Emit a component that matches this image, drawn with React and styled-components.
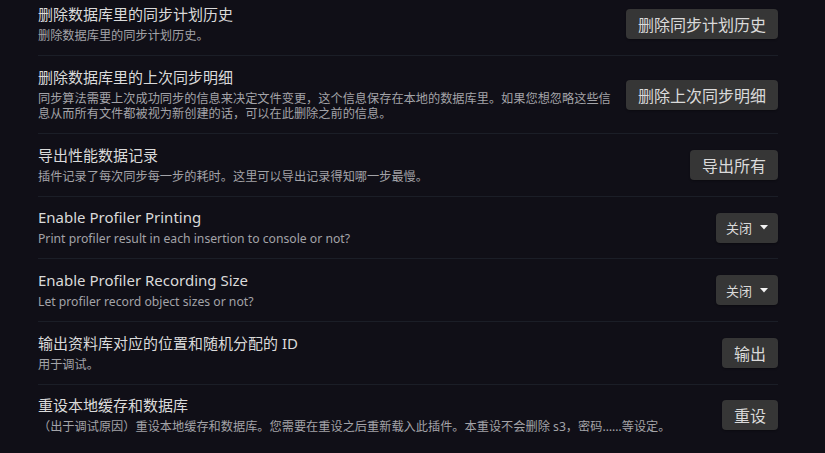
import React from 'react';
import styled, { createGlobalStyle } from 'styled-components';

const Global = createGlobalStyle`
  html, body {
    margin: 0;
    padding: 0;
    background: #100f17;
  }
  body {
    font-family: "Noto Sans", "Noto Sans CJK SC", sans-serif;
  }
`

const Page = styled.div`
  width: 825px;
  height: 453px;
  overflow: hidden;
  box-sizing: border-box;
  padding: 0 47px 0 38px;
  background: #100f17;
`

const Item = styled.div`
  display: flex;
  align-items: center;
  padding: 11.5px 0;
  border-top: 1px solid #1b1e27;

  &:first-child {
    padding-top: 5px;
    border-top: none;
  }
`

const Info = styled.div`
  flex: 1;
  margin-right: 8px;
  min-width: 0;
`

const Title = styled.div`
  font-size: 15px;
  line-height: 19px;
  color: #dadada;
`

const Desc = styled.div`
  padding-top: 4px;
  font-size: 12.2px;
  line-height: 15.6px;
  color: #a3a3a8;
`

const Button = styled.button`
  flex: none;
  height: 30px;
  padding: 0 12px;
  border: none;
  border-radius: 4px;
  background: #363636;
  color: #dadada;
  font-family: inherit;
  font-size: 16px;
  cursor: pointer;
  box-shadow: 0 1px 2px rgba(0, 0, 0, 0.3);
`

const Select = styled.div`
  flex: none;
  display: flex;
  align-items: center;
  gap: 8px;
  height: 30px;
  padding: 0 10px;
  border-radius: 4px;
  background: #363636;
  color: #dadada;
  font-size: 13px;
  box-shadow: 0 1px 2px rgba(0, 0, 0, 0.3);
`

const Caret = () => (
  <svg width="8" height="5" viewBox="0 0 8 5">
    <path d="M0 0 L8 0 L4 4.5 Z" fill="#f2f2f2" />
  </svg>
)

const items = [
  {
    title: '删除数据库里的同步计划历史',
    desc: '删除数据库里的同步计划历史。',
    button: '删除同步计划历史',
  },
  {
    title: '删除数据库里的上次同步明细',
    desc: '同步算法需要上次成功同步的信息来决定文件变更，这个信息保存在本地的数据库里。如果您想忽略这些信息从而所有文件都被视为新创建的话，可以在此删除之前的信息。',
    button: '删除上次同步明细',
  },
  {
    title: '导出性能数据记录',
    desc: '插件记录了每次同步每一步的耗时。这里可以导出记录得知哪一步最慢。',
    button: '导出所有',
  },
  {
    title: 'Enable Profiler Printing',
    desc: 'Print profiler result in each insertion to console or not?',
    select: '关闭',
  },
  {
    title: 'Enable Profiler Recording Size',
    desc: 'Let profiler record object sizes or not?',
    select: '关闭',
  },
  {
    title: '输出资料库对应的位置和随机分配的 ID',
    desc: '用于调试。',
    button: '输出',
  },
  {
    title: '重设本地缓存和数据库',
    desc: '（出于调试原因）重设本地缓存和数据库。您需要在重设之后重新载入此插件。本重设不会删除 s3，密码……等设定。',
    button: '重设',
  },
]

const App = () => {
  return (
    <Page>
      <Global />
      {items.map((it) => (
        <Item key={it.title}>
          <Info>
            <Title>{it.title}</Title>
            <Desc>{it.desc}</Desc>
          </Info>
          {it.button && <Button>{it.button}</Button>}
          {it.select && (
            <Select>
              {it.select}
              <Caret />
            </Select>
          )}
        </Item>
      ))}
    </Page>
  );
}

export default App;
